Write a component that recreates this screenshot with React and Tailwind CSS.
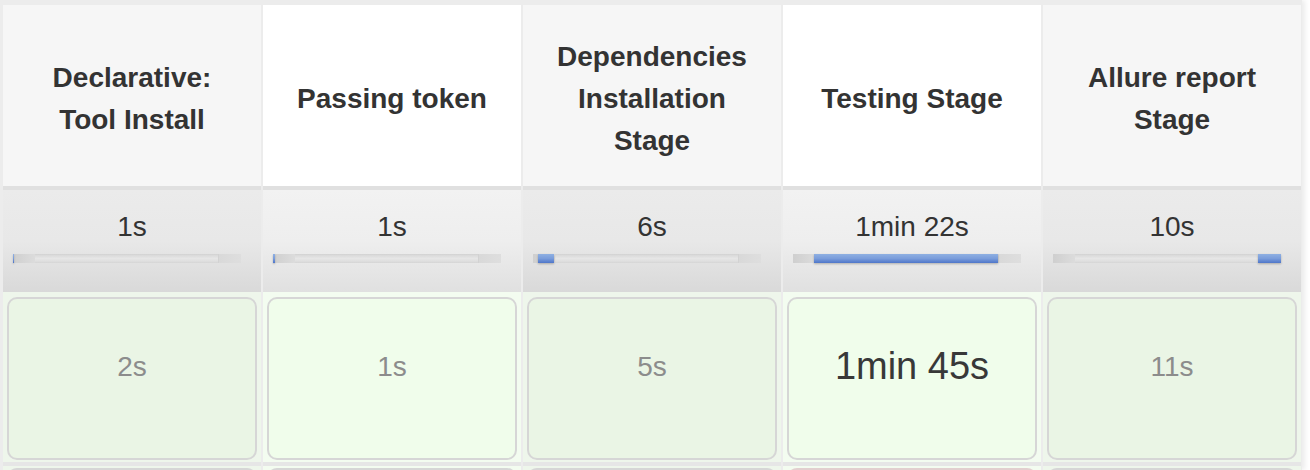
import React from "react";

const stages = [
  { name: ["Declarative:", "Tool Install"], avg: "1s", bar: [0, 1], cell: "2s", big: false },
  { name: ["Passing token"], avg: "1s", bar: [0, 2], cell: "1s", big: false },
  { name: ["Dependencies", "Installation", "Stage"], avg: "6s", bar: [5, 16], cell: "5s", big: false },
  { name: ["Testing Stage"], avg: "1min 22s", bar: [21, 184], cell: "1min 45s", big: true },
  { name: ["Allure report", "Stage"], avg: "10s", bar: [205, 23], cell: "11s", big: false },
];

function Bar({ offset, width }) {
  return (
    <div className="relative ml-[10px] mt-[10px] h-[9px] w-[228px] bg-gradient-to-b from-[#d6d6d6] via-[#e6e6e6] to-[#d9d9d9] shadow-[inset_0_0_1px_rgba(0,0,0,0.15)]">
      <div className="absolute left-0 top-0 h-full w-[22px] bg-gradient-to-r from-[#cfcfcf] to-[#dcdcdc]" />
      <div className="absolute right-0 top-0 h-full w-[23px] bg-gradient-to-r from-[#d9d9d9] to-[#dedede] border-l border-[#d2d2d2]" />
      <div
        className="absolute top-0 h-full bg-gradient-to-b from-[#8fb0e2] via-[#7a9ddb] to-[#4f76c9] shadow-[0_1px_2px_rgba(0,0,0,0.25)]"
        style={{ left: offset, width }}
      />
    </div>
  );
}

export default function App() {
  return (
    <div
      className="w-[1310px] h-[470px] overflow-hidden bg-white"
      style={{ fontFamily: '"Liberation Sans", Arial, Helvetica, sans-serif' }}
    >
      <div className="w-[1302px] h-[470px] bg-[#ececec] pl-[3px] pt-[5px] pr-[1px] shadow-[3px_0_5px_rgba(0,0,0,0.08)]">
        <div className="flex gap-[2px]">
          {stages.map((s, i) => {
            const odd = i % 2 === 0;
            return (
              <div key={i} className="flex w-[258px] flex-col">
                <div
                  className={`flex h-[181px] flex-col items-center justify-center pt-[7px] text-center text-[28px] font-bold leading-[42px] text-[#333333] ${
                    odd ? "bg-[#f6f6f6]" : "bg-white"
                  }`}
                >
                  {s.name.map((l, j) => (
                    <div key={j}>{l}</div>
                  ))}
                </div>
                <div className="h-[4px] bg-[#e0e0e0]" />
                <div
                  className={`h-[102px] pt-[20px] ${
                    odd
                      ? "bg-gradient-to-b from-[#ebebeb] via-[#e8e8e8] to-[#d9d9d9]"
                      : "bg-gradient-to-b from-[#f2f2f2] via-[#eeeeee] to-[#e0e0e0]"
                  }`}
                >
                  <div className="text-center text-[28px] leading-[34px] text-[#333333]">{s.avg}</div>
                  <Bar offset={s.bar[0]} width={s.bar[1]} />
                </div>
                <div className={`px-[4px] pt-[5px] pb-[2px] ${odd ? "bg-[#eef6eb]" : "bg-[#f3fcf0]"}`}>
                  <div
                    className={`h-[163px] rounded-[10px] border-2 border-[#d6d6d6] text-center ${
                      odd ? "bg-[#eaf5e5]" : "bg-[#f0fdeb]"
                    } ${
                      s.big
                        ? "pt-[45px] text-[38px] leading-[44px] text-[#383838]"
                        : "pt-[51px] text-[28px] leading-[34px] text-[#8c8c8c]"
                    }`}
                  >
                    {s.cell}
                  </div>
                </div>
                <div className="h-[4px] bg-[#e6e6e6]" />
                <div className={`px-[4px] pt-[2px] ${odd ? "bg-[#eef6eb]" : "bg-[#f3fcf0]"}`}>
                  <div
                    className={`h-[40px] rounded-t-[10px] border-2 border-b-0 ${
                      i === 3 ? "border-[#e2cfcf]" : "border-[#d6d6d6]"
                    } ${odd ? "bg-[#eaf5e5]" : "bg-[#f0fdeb]"}`}
                  />
                </div>
              </div>
            );
          })}
        </div>
      </div>
    </div>
  );
}
